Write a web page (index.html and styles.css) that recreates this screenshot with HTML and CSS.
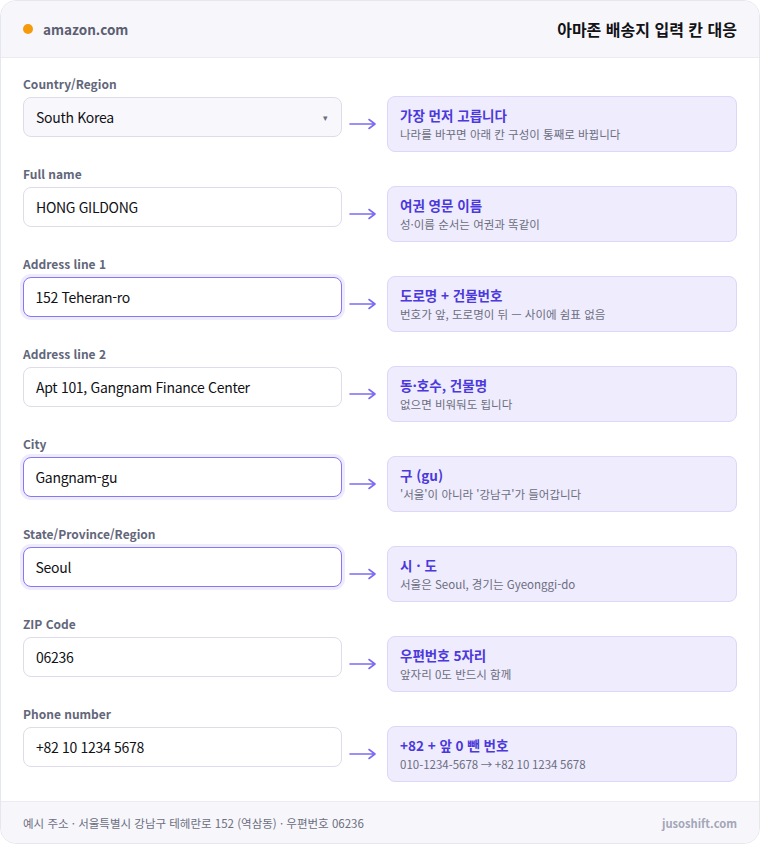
FILE: index.html
```html
<!DOCTYPE html>
<html lang="ko">
<head>
<meta charset="utf-8">
<title>아마존 배송지 입력 칸 대응</title>
<link rel="stylesheet" href="styles.css">
</head>
<body>
<div class="card">
  <header class="head">
    <div class="site"><span class="dot"></span><span class="domain">amazon.com</span></div>
    <h1 class="title">아마존 배송지 입력 칸 대응</h1>
  </header>
  <main class="body">
    <div class="row">
      <div class="field">
        <div class="label">Country/Region</div>
        <div class="input select">South Korea<span class="caret">▾</span></div>
      </div>
      <div class="map">
        <svg class="arrow" width="28" height="12" viewBox="0 0 28 12"><path d="M1 6H26M20 1.5L26 6L20 10.5" fill="none" stroke="#7b6cf2" stroke-width="1.6" stroke-linecap="round" stroke-linejoin="round"/></svg>
        <div class="note"><div class="nt">가장 먼저 고릅니다</div><div class="ns">나라를 바꾸면 아래 칸 구성이 통째로 바뀝니다</div></div>
      </div>
    </div>
    <div class="row">
      <div class="field">
        <div class="label">Full name</div>
        <div class="input">HONG GILDONG</div>
      </div>
      <div class="map">
        <svg class="arrow" width="28" height="12" viewBox="0 0 28 12"><path d="M1 6H26M20 1.5L26 6L20 10.5" fill="none" stroke="#7b6cf2" stroke-width="1.6" stroke-linecap="round" stroke-linejoin="round"/></svg>
        <div class="note"><div class="nt">여권 영문 이름</div><div class="ns">성·이름 순서는 여권과 똑같이</div></div>
      </div>
    </div>
    <div class="row">
      <div class="field">
        <div class="label">Address line 1</div>
        <div class="input focus">152 Teheran-ro</div>
      </div>
      <div class="map">
        <svg class="arrow" width="28" height="12" viewBox="0 0 28 12"><path d="M1 6H26M20 1.5L26 6L20 10.5" fill="none" stroke="#7b6cf2" stroke-width="1.6" stroke-linecap="round" stroke-linejoin="round"/></svg>
        <div class="note"><div class="nt">도로명 + 건물번호</div><div class="ns">번호가 앞, 도로명이 뒤 — 사이에 쉼표 없음</div></div>
      </div>
    </div>
    <div class="row">
      <div class="field">
        <div class="label">Address line 2</div>
        <div class="input">Apt 101, Gangnam Finance Center</div>
      </div>
      <div class="map">
        <svg class="arrow" width="28" height="12" viewBox="0 0 28 12"><path d="M1 6H26M20 1.5L26 6L20 10.5" fill="none" stroke="#7b6cf2" stroke-width="1.6" stroke-linecap="round" stroke-linejoin="round"/></svg>
        <div class="note"><div class="nt">동·호수, 건물명</div><div class="ns">없으면 비워둬도 됩니다</div></div>
      </div>
    </div>
    <div class="row">
      <div class="field">
        <div class="label">City</div>
        <div class="input focus">Gangnam-gu</div>
      </div>
      <div class="map">
        <svg class="arrow" width="28" height="12" viewBox="0 0 28 12"><path d="M1 6H26M20 1.5L26 6L20 10.5" fill="none" stroke="#7b6cf2" stroke-width="1.6" stroke-linecap="round" stroke-linejoin="round"/></svg>
        <div class="note"><div class="nt">구 (gu)</div><div class="ns">'서울'이 아니라 '강남구'가 들어갑니다</div></div>
      </div>
    </div>
    <div class="row">
      <div class="field">
        <div class="label">State/Province/Region</div>
        <div class="input focus">Seoul</div>
      </div>
      <div class="map">
        <svg class="arrow" width="28" height="12" viewBox="0 0 28 12"><path d="M1 6H26M20 1.5L26 6L20 10.5" fill="none" stroke="#7b6cf2" stroke-width="1.6" stroke-linecap="round" stroke-linejoin="round"/></svg>
        <div class="note"><div class="nt">시 · 도</div><div class="ns">서울은 Seoul, 경기는 Gyeonggi-do</div></div>
      </div>
    </div>
    <div class="row">
      <div class="field">
        <div class="label">ZIP Code</div>
        <div class="input">06236</div>
      </div>
      <div class="map">
        <svg class="arrow" width="28" height="12" viewBox="0 0 28 12"><path d="M1 6H26M20 1.5L26 6L20 10.5" fill="none" stroke="#7b6cf2" stroke-width="1.6" stroke-linecap="round" stroke-linejoin="round"/></svg>
        <div class="note"><div class="nt">우편번호 5자리</div><div class="ns">앞자리 0도 반드시 함께</div></div>
      </div>
    </div>
    <div class="row">
      <div class="field">
        <div class="label">Phone number</div>
        <div class="input">+82 10 1234 5678</div>
      </div>
      <div class="map">
        <svg class="arrow" width="28" height="12" viewBox="0 0 28 12"><path d="M1 6H26M20 1.5L26 6L20 10.5" fill="none" stroke="#7b6cf2" stroke-width="1.6" stroke-linecap="round" stroke-linejoin="round"/></svg>
        <div class="note"><div class="nt">+82 + 앞 0 뺀 번호</div><div class="ns">010-1234-5678 → +82 10 1234 5678</div></div>
      </div>
    </div>
  </main>
  <footer class="foot">
    <span class="ex">예시 주소 · 서울특별시 강남구 테헤란로 152 (역삼동) · 우편번호 06236</span>
    <span class="brand">jusoshift.com</span>
  </footer>
</div>
</body>
</html>
```

FILE: styles.css
```css
* { box-sizing: border-box; }
html, body { margin: 0; padding: 0; background: #ffffff; }
body {
  font-family: "Noto Sans CJK KR", "Noto Sans", sans-serif;
  color: #1a1a1f;
}
.card {
  width: 760px;
  border: 1px solid #e6e6ee;
  border-radius: 16px;
  overflow: hidden;
  background: #ffffff;
}
.head {
  height: 57px;
  background: #f7f7fb;
  border-bottom: 1px solid #ebebf2;
  display: flex;
  align-items: center;
  justify-content: space-between;
  padding: 0 22px 0 22px;
}
.site { display: flex; align-items: center; gap: 10px; }
.dot { width: 10px; height: 10px; border-radius: 50%; background: #f59a0b; }
.domain { font-size: 13.5px; font-weight: 700; color: #5b5e72; }
.title { margin: 0; font-size: 16px; font-weight: 700; color: #121217; }
.body {
  padding: 17px 22px 19px 22px;
  display: flex;
  flex-direction: column;
  gap: 13px;
}
.row { display: flex; align-items: flex-start; }
.field { width: 320px; display: flex; flex-direction: column; gap: 4px; }
.label { font-size: 12px; line-height: 18px; font-weight: 700; color: #62667a; }
.input {
  height: 40px;
  border: 1px solid #dedcea;
  border-radius: 8px;
  background: #ffffff;
  padding: 0 13px 0 12px;
  display: flex;
  align-items: center;
  font-size: 14px;
  letter-spacing: -0.3px;
  color: #111116;
}
.input.select { background: #f8f8fc; justify-content: space-between; }
.caret { font-size: 9px; color: #6b6e80; }
.input.focus {
  border: 1.5px solid #8677f5;
  box-shadow: 0 0 0 3px #eeebfd;
  padding-left: 11.5px;
}
.map { display: flex; align-items: center; margin-top: 21px; }
.arrow { margin: 0 10px 0 7px; display: block; }
.note {
  width: 350px;
  height: 56px;
  background: #efecfd;
  border: 1px solid #dcd6fa;
  border-radius: 8px;
  padding: 8px 12px 0 12px;
}
.nt { font-size: 13.5px; line-height: 20px; font-weight: 700; color: #4b39dc; }
.ns { font-size: 11.5px; line-height: 18px; color: #6b6e80; }
.foot {
  height: 42px;
  background: #f7f7fb;
  border-top: 1px solid #ebebf2;
  display: flex;
  align-items: center;
  justify-content: space-between;
  padding: 0 22px;
}
.ex { font-size: 11.5px; color: #6b6e80; }
.brand { font-size: 11.2px; font-weight: 700; color: #a3a6b8; }
```
